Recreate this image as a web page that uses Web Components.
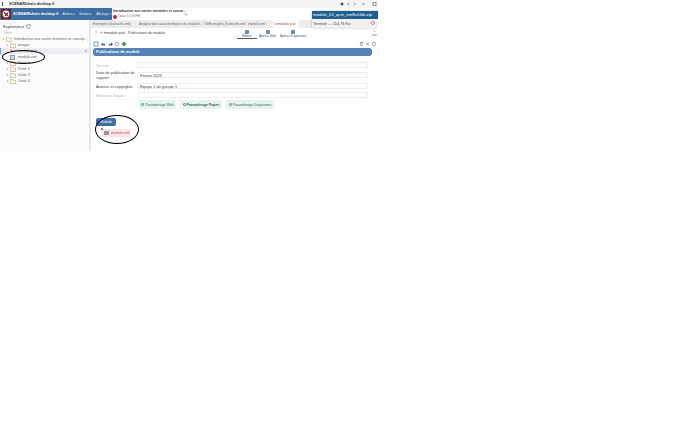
<!DOCTYPE html>
<html lang="fr">
<head>
<meta charset="utf-8">
<title>SCENARIchain</title>
<style>
  html, body { margin: 0; background: #fff; }
  body { font-family: "Liberation Sans", Arial, sans-serif; color: #333; }
</style>
</head>
<body>
<app-window>
  <title-bar slot="title"></title-bar>
  <top-bar slot="top"></top-bar>
  <side-tree slot="side"></side-tree>
  <editor-pane slot="main"></editor-pane>
</app-window>
<script>
class AppWindow extends HTMLElement {
  constructor() {
    super();
    this.attachShadow({ mode: "open" });
  }
  connectedCallback() {
    this.shadowRoot.innerHTML = /*html*/ `
    <style>
      :host { display: block; position: relative; width: 378px; height: 151px; overflow: hidden; background: #fff; }
      .body { display: flex; height: 131px; }
      .pop { position: absolute; left: 312px; top: 11px; width: 66px; height: 17px; box-shadow: 0 0 2px rgba(0,0,0,.3); background: #f1f1f1; }
      .pop b { display: block; height: 8px; line-height: 8px; padding-left: 1px; background: #1f5f92; color: #fff; font-weight: 400; font-size: 4.2px; white-space: nowrap; }
      .pop span { display: flex; justify-content: space-between; padding: 1px 2px 0 1px; line-height: 7px; color: #444; font-size: 3.9px; white-space: nowrap; }
      .pop i { width: 4px; height: 4px; margin: 1px 1px 0 0; border: 1px solid #d98a80; border-radius: 50%; box-sizing: border-box; }
      .ring { position: absolute; border: 1.6px solid #000; border-radius: 50%; box-sizing: border-box; }
    </style>
    <slot name="title"></slot>
    <slot name="top"></slot>
    <div class="body"><slot name="side"></slot><slot name="main"></slot></div>
    <div class="pop"><b>module_02_qcm_xmlSvUde.zip</b><span>Terminé — 114,76 Ko<i></i></span></div>
    <div class="ring" style="left:2px;top:50px;width:43px;height:14px"></div>
    <div class="ring" style="left:95px;top:115px;width:44px;height:29px"></div>`;
  }
}
class TitleBar extends HTMLElement {
  constructor() {
    super();
    this.attachShadow({ mode: "open" });
  }
  connectedCallback() {
    this.shadowRoot.innerHTML = /*html*/ `
    <style>
      :host { display: flex; align-items: center; height: 8px; background: #f5f5f5; font-size: 3.75px; font-weight: 700; color: #333; }
      .mark { width: 1px; height: 4px; margin: 0 6px 0 2px; background: #555; }
      .ctl { margin-left: auto; display: flex; align-items: center; font-weight: 400; }
      .ctl svg { display: block; }
    </style>
    <span class="mark"></span>SCENARIchain desktop 6
    <span class="ctl"><svg width="38" height="6" viewBox="0 0 38 6" fill="none" stroke="#555" stroke-width=".6"><circle cx="2" cy="3" r="1.200" fill="#555"/><path d="M9 1.500 7.500 3 9 4.500M14 1.500 15.500 3 14 4.500M22 3h3"/><rect x="33" y="1.500" width="3" height="3"/></svg></span>`;
  }
}
class TopBar extends HTMLElement {
  constructor() {
    super();
    this.attachShadow({ mode: "open" });
  }
  connectedCallback() {
    this.shadowRoot.innerHTML = /*html*/ `
    <style>
      :host { display: flex; height: 12px; background: #fff; }
      .brand { display: flex; align-items: center; width: 112px; background: #3e6fa3; color: #fff; }
      .logo { width: 10px; height: 10px; margin: 0 2px 0 1px; flex: none; }
      .brand b { font-size: 3.75px; margin-right: 4px; white-space: nowrap; }
      .brand span { margin-right: 4px; white-space: nowrap; color: #e4ecf5; font-size: 3px; }
      .doc { padding: 1px 0 0 1px; line-height: 5px; width: 70px; }
      .doc b { display: block; white-space: nowrap; font-size: 3.5px; color: #333; }
      .doc small { display: flex; align-items: center; gap: 1px; font-size: 3px; color: #666; }
      .doc small i { width: 4px; height: 4px; border-radius: 50%; background: #b3264a; }
      .chev { align-self: center; margin-left: 1px; }
    </style>
    <div class="brand">
      <svg class="logo" viewBox="0 0 10 10"><rect width="10" height="10" fill="#7c1f20"/><circle cx="5" cy="5" r="3.400" fill="#fff"/><path d="M3 3.200 7 7M4 7.200 7 3.600" stroke="#7c1f20" stroke-width="1.300"/></svg>
      <b>SCENARIchain desktop 6</b><span>Ateliers ▾</span><span>Gestion ▾</span><span>Affichage ▾</span>
    </div>
    <div class="doc"><b>Introduction aux cartes mentales et conce...</b><small><i></i>Oasis 1.0 (fr-FR)</small></div>
    <svg class="chev" width="4" height="3" viewBox="0 0 4 3"><path d="M.5.800 2 2.200 3.500.800" fill="none" stroke="#555" stroke-width=".6"/></svg>`;
  }
}
class SideTree extends HTMLElement {
  constructor() {
    super();
    this.attachShadow({ mode: "open" });
  }
  connectedCallback() {
    const folder = `<svg width="6" height="5" viewBox="0 0 6 5" style="flex:none"><path d="M.3.500h2l.6.700h2.800v3.300H.3z" fill="#fdf8e6" stroke="#a39a7c" stroke-width=".5"/></svg>`;
    const arrow = `<svg width="3" height="4" viewBox="0 0 3 4" style="flex:none"><path d="M1 .800 2.200 2 1 3.200" fill="none" stroke="#777" stroke-width=".5"/></svg>`;
    this.shadowRoot.innerHTML = /*html*/ `
    <style>
      :host { display: block; box-sizing: border-box; width: 91px; border-right: 2px solid #e4e6ea; background: #fbfbfb; font-size: 3.7px; color: #666; padding-top: 3px; }
      .head { display: flex; align-items: center; gap: 2px; height: 7px; padding-left: 3px; color: #444; font-size: 4.200px; }
      .filter { height: 6px; line-height: 6px; padding-left: 4px; font-size: 3px; color: #aaa; }
      .row { display: flex; align-items: center; height: 6px; white-space: nowrap; overflow: hidden; }
      .l1 { padding-left: 2px; gap: 1px; }
      .l2 { padding-left: 6px; gap: 1px; }
      .l2 svg + svg { margin-right: 1px; }
      .l1 svg + svg { margin-right: 1px; }
      .sel { background: #eceef1; color: #777; box-shadow: inset 1px 0 0 #7fa3cc; }
      .sel em { margin-left: auto; margin-right: 2px; font-style: normal; font-size: 3px; color: #555; }
      .doc { width: 5px; height: 5px; background: #d7deea; border: .5px solid #8c9ab0; box-sizing: border-box; margin: 0 2px 0 4px; flex: none; }
      .pub { color: #c0392b; margin: 0 2px 0 4px; width: 5px; }
    </style>
    <div class="head">Explorateur <svg width="5" height="5" viewBox="0 0 5 5"><path d="M4 1.200A2 2 0 1 0 4.400 3M4.300.200v1.400H3" fill="none" stroke="#567" stroke-width=".6"/></svg></div>
    <div class="filter">Filtres</div>
    <div class="row l1">${arrow}${folder}Introduction aux cartes mentales et concep...</div>
    <div class="row l2">${arrow}${folder}images</div>
    <div class="row l2 sel"><span class="pub">✶</span>module.pub<em>▾</em></div>
    <div class="row l2"><span class="doc"></span>module.xml</div>
    <div class="row l2">${arrow}${folder}Unité 1</div>
    <div class="row l2">${arrow}${folder}Unité 2</div>
    <div class="row l2">${arrow}${folder}Unité 3</div>
    <div class="row l2">${arrow}${folder}Unité 4</div>`;
  }
}
class EditorPane extends HTMLElement {
  constructor() {
    super();
    this.attachShadow({ mode: "open" });
  }
  connectedCallback() {
    this.shadowRoot.innerHTML = /*html*/ `
    <style>
      :host { display: block; width: 287px; font-size: 3.9px; color: #444; }
      .tabs { display: flex; height: 8px; background: #ececec; padding-left: 1px; }
      .tabs span { flex: none; box-sizing: border-box; padding-left: 1px; line-height: 8px; white-space: nowrap; color: #666; font-size: 3.4px; overflow: hidden; }
      .tabs .on { background: #fff; color: #b0413e; }
      .crumb { display: flex; align-items: flex-start; height: 11px; padding: 0 70px 0 3px; box-sizing: border-box; position: relative; }
      .crumb .path { margin-top: 3px; font-size: 3.6px; white-space: nowrap; }
      .crumb .path b { color: #b0413e; font-weight: 400; }
      .views { margin-left: auto; display: flex; font-size: 3.1px; color: #456; text-align: center; }
      .views div { display: flex; flex-direction: column; align-items: center; box-sizing: border-box; height: 11px; padding-top: 2px; line-height: 4px; white-space: nowrap; }
      .views .on { border-bottom: 1px solid #555; }
      .views i { width: 4px; height: 4px; background: #6a8bb0; border-radius: 1px; }
      .more { position: absolute; right: 1px; top: 1px; width: 5px; color: #666; font-size: 3px; line-height: 4px; text-align: center; }
      .tools { display: flex; align-items: center; height: 9px; padding: 0 0 0 2px; }
      .tools svg { display: block; flex: none; }
      .bar { margin: 0 6px 0 2px; height: 8px; line-height: 8px; border-radius: 3px; background: #5583b5; color: #fff; font-weight: 700; padding-left: 3px; font-size: 3.9px; }
      .form { padding: 6px 10px 0 5px; }
      .f { display: grid; grid-template-columns: 42px 1fr; align-items: center; }
      .f div { box-sizing: border-box; border: .5px solid #eceef0; height: 6px; line-height: 5px; padding-left: 1px; }
      .f label { line-height: 5px; }
      .dim label { color: #b4b8bd; }
      .btns { display: flex; gap: 4px; margin: 2px 0 0 43px; }
      .btns span { display: flex; align-items: center; justify-content: center; gap: 1px; box-sizing: border-box; height: 9px; background: #e9f3ee; color: #2e6b5a; white-space: nowrap; font-size: 3.500px; border-radius: 1px; }
      .btns i { width: 3px; height: 3px; border: .6px solid #2e8b6f; border-radius: 50%; box-sizing: border-box; flex: none; }
      .tag { width: 20px; margin-top: 9px; height: 8px; line-height: 8px; text-align: center; border-radius: 2px; background: #3e6fa3; color: #fff; font-size: 3.8px; }
      .item { display: flex; align-items: center; gap: 2px; width: 28px; box-sizing: border-box; margin: 3px 0 0 6px; height: 8px; padding-left: 2px; background: #fbe4e4; color: #a66; position: relative; font-size: 3.7px; }
      .item i { width: 5px; height: 4px; background: #9b8fa8; flex: none; }
      .item s { position: absolute; left: -1px; top: -1px; width: 2px; height: 2px; background: #c9303e; border-radius: 50%; }
    </style>
    <div class="tabs">
      <span style="width:46px">Exemples (Icalniathi.xml)</span><span style="width:65px">Analyse des caractéristiques du strabisé...</span><span style="width:44px">TdiExemples (Icalniathi.xml</span><span style="width:26px">module.xml</span><span class="on" style="width:26px">#emodule.pub</span>
    </div>
    <div class="crumb">
      <span class="path">⋮ &nbsp;» <b>✶</b>module.pub - Publications du module</span>
      <div class="views"><div class="on" style="width:20px"><i></i>Édition</div><div style="width:21px"><i></i>Aperçu Web</div><div style="width:30px"><i></i>Aperçu Diaporama</div></div>
      <div class="more">+<br>xxx</div>
    </div>
    <div class="tools">
      <svg width="284" height="6" viewBox="0 0 284 6">
        <rect x="1" y="1" width="4" height="4" fill="none" stroke="#3e6fa3" stroke-width=".7"/>
        <path d="M8 3.500 10 1.500v1.200h2v2l-2-.8v1z" fill="#2f5f93"/>
        <path d="M20 3.500 18 1.500v1.200h-2v2l2-.8v1z" fill="#2f5f93"/>
        <circle cx="24" cy="3" r="1.800" fill="none" stroke="#7a9a9a" stroke-width=".8"/>
        <path d="M30 1h2v1.200h1.200v1.600H32V5h-2V3.800h-1.200V2.200H30z" fill="#3f9a60"/>
        <path d="M267 1.500h3L269 4.500h-1zM273 4.500l3-3M273.500 1.500l2.500 3" fill="none" stroke="#5a6570" stroke-width=".6"/>
        <path d="M281 1a1.600 1.600 0 0 1 1.600 1.600c0 1-1.600 2.900-1.600 2.900s-1.600-1.900-1.600-2.900A1.600 1.600 0 0 1 281 1z" fill="none" stroke="#5a6570" stroke-width=".6"/>
      </svg>
    </div>
    <div class="bar">Publications de module</div>
    <div class="form">
      <div class="f dim"><label>Version</label><div></div></div>
      <div class="f" style="margin-top:2px"><label>Date de publication du support</label><div>Février 2023</div></div>
      <div class="f" style="margin-top:3px"><label>Auteurs et copyrights</label><div>Equipe 1 du groupe 1</div></div>
      <div class="f dim" style="margin-top:3px"><label>Mentions légales</label><div></div></div>
      <div class="btns"><span style="width:37px"><i></i>Paramétrage Web</span><span style="width:42px;font-weight:700"><i></i>Paramétrage Papier</span><span style="width:48px"><i></i>Paramétrage Diaporama</span></div>
      <div class="tag">Module</div>
      <div class="item"><s></s><i></i>module.xml</div>
    </div>`;
  }
}
customElements.define("app-window", AppWindow);
customElements.define("title-bar", TitleBar);
customElements.define("top-bar", TopBar);
customElements.define("side-tree", SideTree);
customElements.define("editor-pane", EditorPane);
</script>
</body>
</html>
